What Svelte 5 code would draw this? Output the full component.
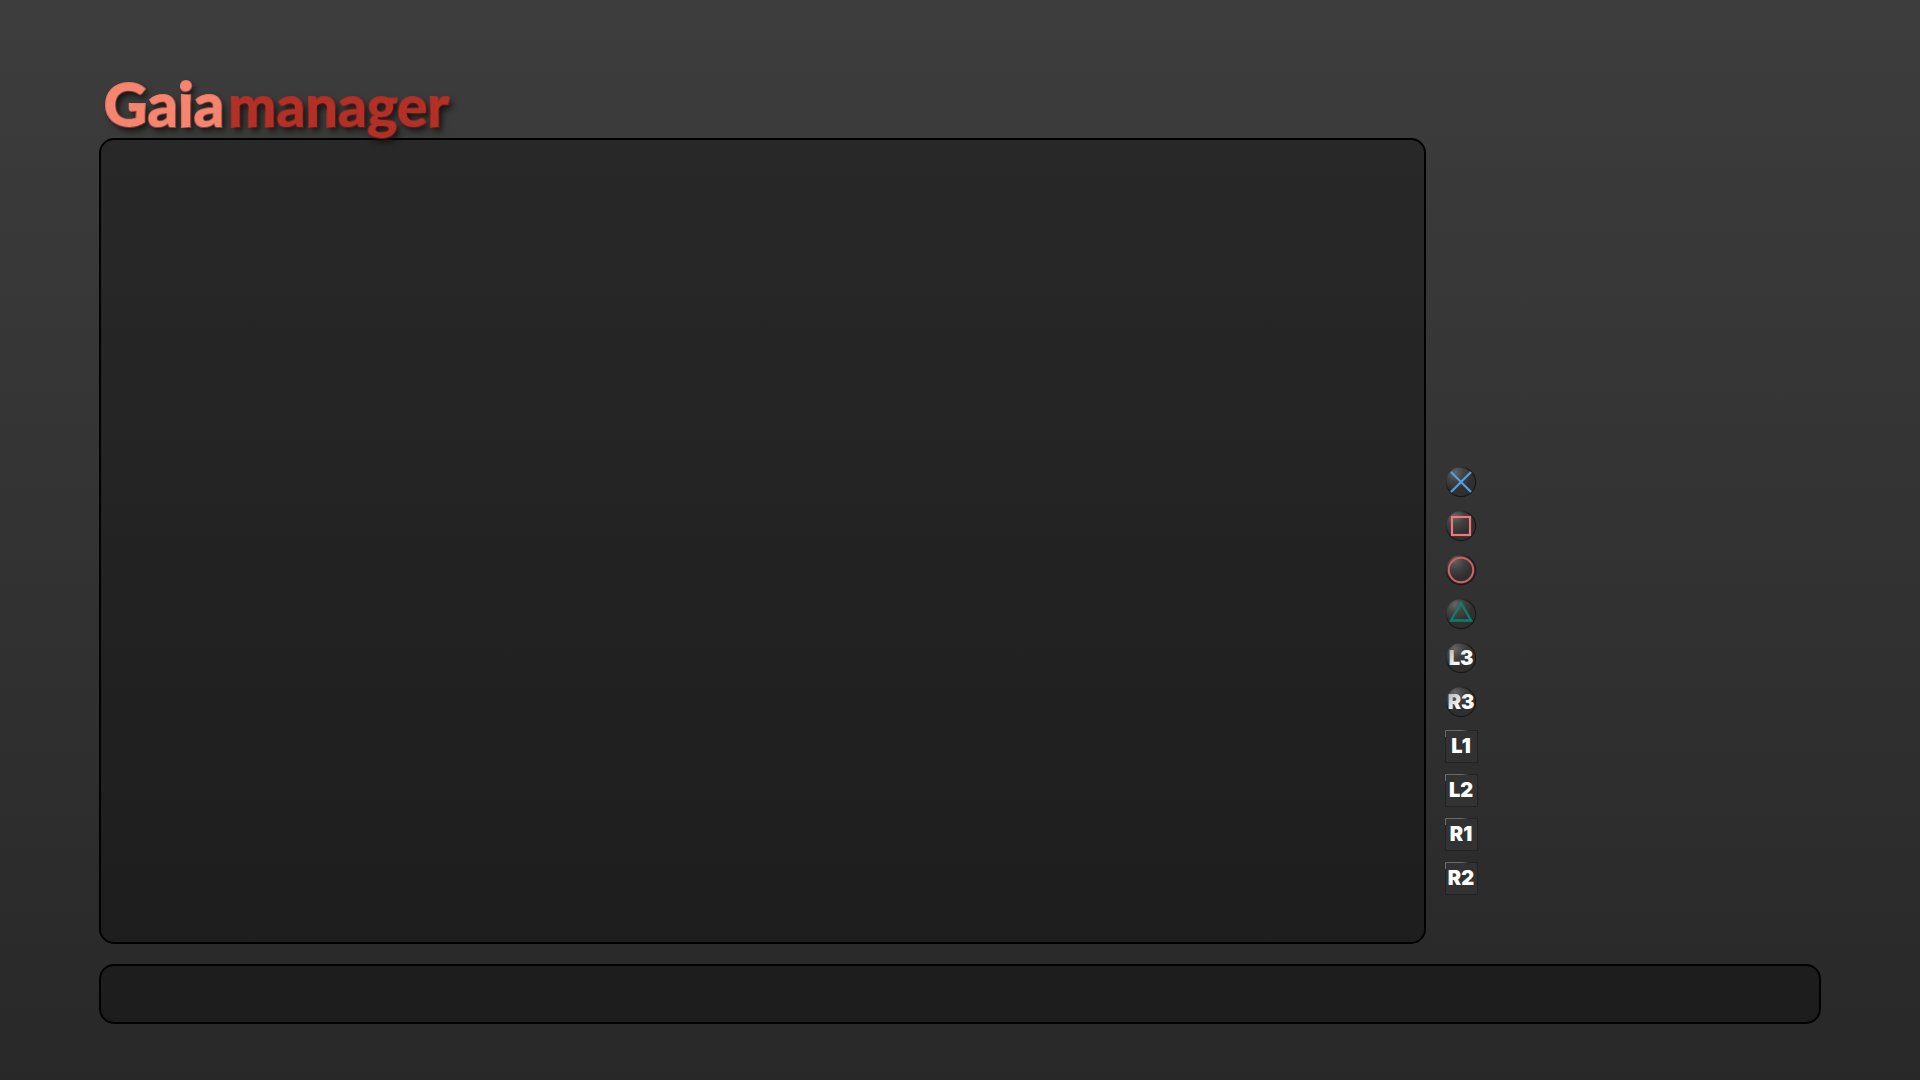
<script>
    const shapes = ['cross', 'square', 'circle', 'triangle'];

    const buttons = [
        { name: 'cross', round: true },
        { name: 'square', round: true },
        { name: 'circle', round: true },
        { name: 'triangle', round: true },
        { name: 'L3', round: true },
        { name: 'R3', round: true },
        { name: 'L1', round: false },
        { name: 'L2', round: false },
        { name: 'R1', round: false },
        { name: 'R2', round: false },
    ];
</script>

<div class="screen">
    <header class="header">
        <h1 class="logo"><span class="logo__first">Gaia</span><span class="logo__second">manager</span></h1>
    </header>

    <main class="content">
        <section class="panel"></section>
        <ul class="legend">
            {#each buttons as button}
                <li class="legend__item">
                    <svg class="pad" viewBox="0 0 33 33" role="img" aria-label={button.name}>
                        {#if button.round}
                            <circle cx="16" cy="16" r="15" fill="url(#pad-base)" />
                            <circle cx="16" cy="16" r="14.6" fill="none" stroke="url(#pad-rim)" stroke-width="1.2" />
                        {:else}
                            <rect x="0.5" y="0.5" width="32" height="32" fill="#323232" stroke="#232323" />
                            <path d="M0.5 7V0.5H24" fill="none" stroke="url(#pad-edge)" />
                        {/if}

                        {#if button.name === 'cross'}
                            <path d="M6 6L26 26M26 6L6 26" stroke="#559fe4" stroke-width="2.2" />
                        {:else if button.name === 'square'}
                            <rect x="7" y="7" width="18" height="18" fill="none" stroke="#f37676" stroke-width="2.2" />
                        {:else if button.name === 'circle'}
                            <circle cx="16" cy="16" r="12.2" fill="none" stroke="#d85f61" stroke-width="2" />
                        {:else if button.name === 'triangle'}
                            <path d="M16 5L26 22.5H6Z" fill="none" stroke="#0b806b" stroke-width="2.3" />
                        {/if}

                        {#if !shapes.includes(button.name)}
                            <text
                                x="16"
                                y="23"
                                text-anchor="middle"
                                class="pad__text"
                                fill={button.round ? 'url(#pad-text)' : '#ffffff'}
                            >{button.name}</text>
                        {/if}
                    </svg>
                </li>
            {/each}
        </ul>
    </main>

    <footer class="status"></footer>
</div>

<svg class="defs" aria-hidden="true">
    <defs>
        <radialGradient id="pad-base" cx="0.3" cy="0.18" r="0.6">
            <stop offset="0" stop-color="#646464" />
            <stop offset="0.5" stop-color="#424242" />
            <stop offset="1" stop-color="#2f2f2f" />
        </radialGradient>
        <linearGradient id="pad-rim" x1="0" y1="0" x2="1" y2="1">
            <stop offset="0.15" stop-color="#181818" stop-opacity="0" />
            <stop offset="0.45" stop-color="#181818" />
        </linearGradient>
        <linearGradient id="pad-edge" gradientUnits="userSpaceOnUse" x1="0" y1="0" x2="24" y2="0">
            <stop offset="0" stop-color="#6a6a6a" />
            <stop offset="0.7" stop-color="#6a6a6a" />
            <stop offset="1" stop-color="#232323" />
        </linearGradient>
        <linearGradient id="pad-text" x1="0" y1="0" x2="0.7" y2="0.7">
            <stop offset="0" stop-color="#a8a8a8" />
            <stop offset="0.8" stop-color="#ffffff" />
        </linearGradient>
    </defs>
</svg>

<style>
    :global(body) {
        margin: 0;
    }

    .screen {
        box-sizing: border-box;
        display: flex;
        flex-direction: column;
        min-height: 100vh;
        padding: 0 99px 56px;
        background: linear-gradient(#3d3d3d, #282828);
    }

    .header {
        box-sizing: border-box;
        position: relative;
        z-index: 1;
        height: 138px;
        padding: 66px 0 0 5px;
    }

    .logo {
        display: flex;
        align-items: baseline;
        gap: 4px;
        margin: 0;
        font-family: Lato, "Open Sans", sans-serif;
        font-size: 60px;
        font-weight: 900;
        line-height: 76px;
        text-shadow: 3px 4px 6px rgba(0, 0, 0, 0.7);
        -webkit-text-stroke: 2px currentColor;
        paint-order: stroke fill;
    }

    .logo__first {
        color: #f6846f;
    }

    .logo__second {
        color: #b23127;
        font-size: 57px;
    }

    .content {
        display: flex;
        flex: 1;
        gap: 19px;
    }

    .panel,
    .status {
        box-sizing: border-box;
        border: 2px solid #000;
        border-radius: 15px;
        background: rgba(0, 0, 0, 0.3);
    }

    .panel {
        flex: 1;
    }

    .legend {
        display: flex;
        flex-direction: column;
        justify-content: flex-end;
        gap: 11px;
        width: 376px;
        margin: 0;
        padding: 0 0 49px;
        list-style: none;
    }

    .legend__item {
        height: 33px;
    }

    .pad {
        display: block;
        width: 33px;
        height: 33px;
    }

    .pad__text {
        font-family: Inter, "Liberation Sans", sans-serif;
        font-size: 20px;
        font-weight: 900;
    }

    .status {
        height: 60px;
        margin-top: 20px;
    }

    .defs {
        position: absolute;
        width: 0;
        height: 0;
    }
</style>
